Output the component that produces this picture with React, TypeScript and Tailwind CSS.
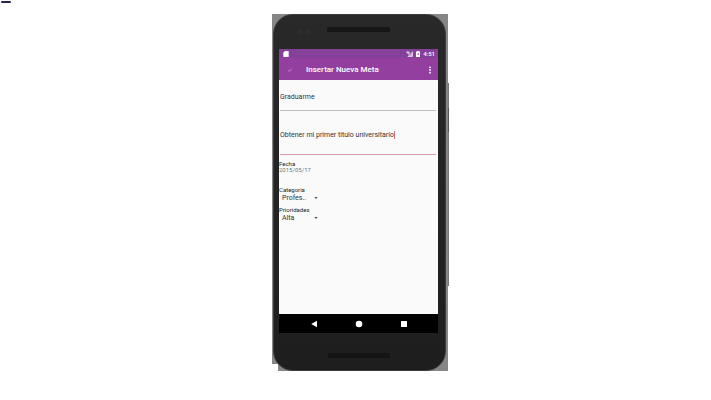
import React from 'react'
import { clsx } from 'clsx'

const NavButton = ({ label, children }: { label: string, children: React.ReactNode }) => (
  <button type="button" aria-label={label} className="flex w-[45px] items-center justify-center text-white">
    <svg viewBox="0 0 8 8" className="size-2" fill="currentColor">{children}</svg>
  </button>
)

const Spinner = ({ id, label, value }: { id: string, label: string, value: string }) => (
  <div className="flex h-5 flex-col">
    <label htmlFor={id} className="text-[6px] leading-[8px] text-[#222]">{label}</label>
    <div className="flex h-2 w-[39px] items-center justify-between pl-[3px]">
      <select id={id} defaultValue={value} className="w-8 appearance-none bg-transparent text-[7px] leading-[8px] text-[#333] outline-none">
        <option>{value}</option>
      </select>
      <svg viewBox="0 0 4 2" className="h-0.5 w-1" fill="#555" aria-hidden="true">
        <path d="M.3 0h3.4L2 2z" />
      </svg>
    </div>
  </div>
)

const StatusBar = () => (
  <div className="flex h-[9px] items-center justify-between bg-[#85419a] pr-[3px] pl-1 text-white">
    <svg viewBox="0 0 6 6" className="size-1.5" fill="currentColor">
      <path d="M2 0h3.2a.5.5 0 0 1 .5.5v5a.5.5 0 0 1-.5.5H.8a.5.5 0 0 1-.5-.5V1.7z" />
    </svg>
    <div className="flex items-center gap-[3px]">
      <svg viewBox="0 0 7 6" className="h-1.5 w-[7px]" fill="none" stroke="currentColor">
        <path d="M.3 1h3M.8 1l2 2.4M3 1v2.3" strokeWidth=".8" />
        <path d="M6.7.3v5.4H1.3z" fill="currentColor" fillOpacity=".55" stroke="none" />
        <path d="M6.4.8v4.6H1.8" strokeWidth=".6" />
      </svg>
      <svg viewBox="0 0 4 6" className="h-1.5 w-1">
        <path d="M1.2 0h1.6v.6H4V6H0V.6h1.2z" fill="#fff" />
        <path d="M2.4 1.4 1.2 3.4h.8v1.2l1.1-1.9h-.7z" fill="#85419a" />
      </svg>
      <span className="text-[6px] leading-[8px] font-medium">4:51</span>
    </div>
  </div>
)

const AppBar = () => (
  <header className="flex h-[22px] items-center bg-[#923fa0] pt-px pr-1 pl-2 text-white">
    <button type="button" aria-label="Guardar" className="flex w-[19px] items-center">
      <svg viewBox="0 0 6 6" className="size-1.5" fill="none" stroke="#d2a5dc" strokeWidth=".8">
        <path d="M1.2 3.3 2.4 4.4 4.8 1.7" />
      </svg>
    </button>
    <h1 className="flex-1 text-[8px] leading-[10px] font-medium whitespace-nowrap">Insertar Nueva Meta</h1>
    <button type="button" aria-label="Más opciones" className="flex w-2 justify-center">
      <svg viewBox="0 0 2 8" className="h-2 w-0.5" fill="currentColor">
        <circle cx="1" cy="1.3" r=".9" />
        <circle cx="1" cy="4" r=".9" />
        <circle cx="1" cy="6.7" r=".9" />
      </svg>
    </button>
  </header>
)

const fields = [
  { id: 'titulo', label: 'Título', value: 'Graduarme', active: false },
  { id: 'descripcion', label: 'Descripción', value: 'Obtener mi primer titulo universitario', active: true },
]

export default function App() {
  return (
    <main className="relative flex min-h-screen justify-center bg-white pt-3.5 pb-7 pl-[9px] font-[Roboto,sans-serif]">
      <div className="absolute top-px left-px h-0.5 w-2.5 rounded-sm bg-[#24244c]" />

      <div className="relative w-44 self-start">
        <div className="absolute top-[69px] -right-px h-[203px] w-0.5 bg-[#777]" />
        <div className="absolute top-[94px] -right-px h-6 w-0.5 bg-[#555]" />

        <div className="bg-[#868686] pr-0.5 pl-px [clip-path:polygon(0_0,100%_0,100%_100%,6px_100%,6px_calc(100%-7px),0_calc(100%-7px))]">
          <div className="rounded-[20px] border border-[#3c3c3c] bg-linear-to-b from-[#292929] to-[#1e1e1e] pr-[7px] pl-[5px]">
            <div className="flex h-[34px] items-center justify-center gap-4 pr-[28px]">
              <div className="flex gap-1">
                <span className="size-1 rounded-full bg-[#2f2f2f]" />
                <span className="size-1 rounded-full bg-[#2f2f2f]" />
              </div>
              <div className="mb-1.5 h-[5px] w-[63px] rounded-[1px] bg-[#161616]" />
            </div>

            <div className="flex flex-col bg-[#fafafa]">
              <StatusBar />
              <AppBar />
              <form className="flex h-[234px] flex-col">
                {fields.map((field) => (
                  <div
                    key={field.id}
                    className={clsx(
                      'mr-0.5 ml-px flex items-center border-b pt-1',
                      field.active ? 'h-11 border-[#dc9bab]' : 'h-[31px] border-[#bdbdbd]'
                    )}
                  >
                    <input
                      id={field.id}
                      aria-label={field.label}
                      defaultValue={field.value}
                      className="bg-transparent text-[7px] leading-[10px] text-[#333] outline-none [field-sizing:content]"
                    />
                    {field.active && <span className="h-2 w-px bg-[#e0708a]" />}
                  </div>
                ))}

                <div className="mt-1.5 flex flex-col text-[6px] leading-[6px]">
                  <span className="text-[#222]">Fecha</span>
                  <span className="text-[#777]">2015/05/17</span>
                </div>

                <div className="mt-[13px] flex flex-col">
                  <Spinner id="categoria" label="Categoria" value="Profes.." />
                  <Spinner id="prioridades" label="Prioridades" value="Alta" />
                </div>
              </form>
              <nav className="flex h-[19px] items-center justify-center bg-black">
                <NavButton label="Atrás"><path d="M7 .8v6.4L1.2 4z" /></NavButton>
                <NavButton label="Inicio"><circle cx="4" cy="4" r="3.3" /></NavButton>
                <NavButton label="Recientes"><rect x="1" y="1" width="6" height="6" rx=".5" /></NavButton>
              </nav>
            </div>

            <div className="flex h-[37px] items-center justify-center">
              <div className="mt-2 h-[5px] w-[62px] rounded-[1px] bg-[#151515]" />
            </div>
          </div>
        </div>
      </div>
    </main>
  )
}
